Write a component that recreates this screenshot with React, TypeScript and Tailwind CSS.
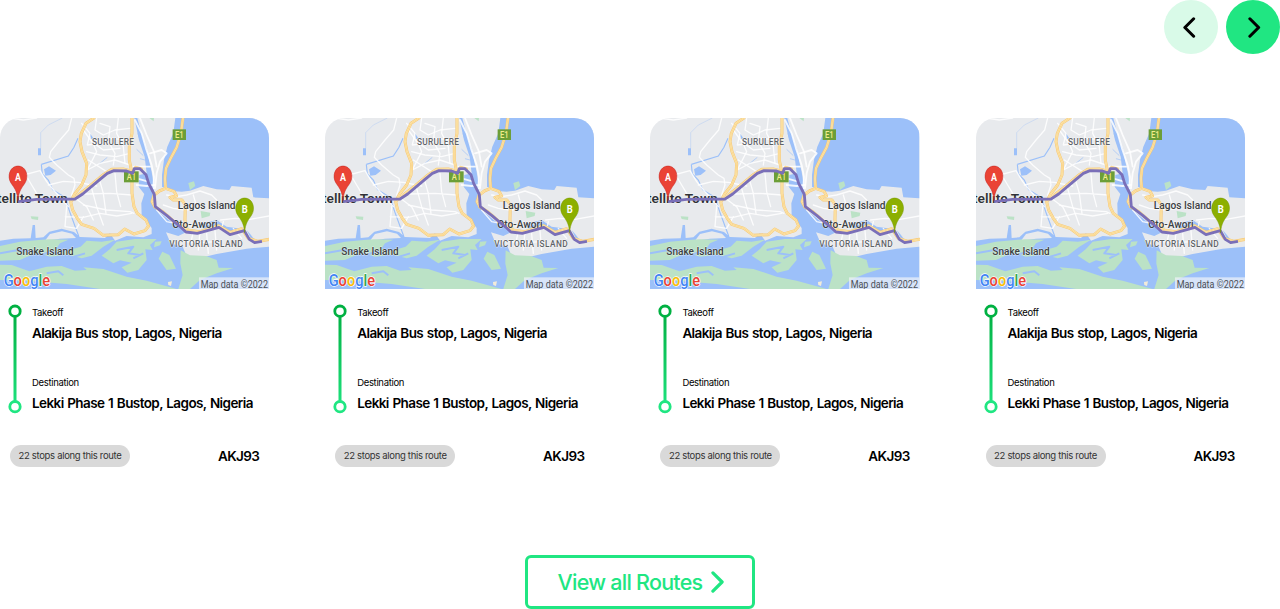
import React from "react";

type Route = { from: string; to: string; stops: number; code: string };

const routes: Route[] = Array.from({ length: 4 }, () => ({
  from: "Alakija Bus stop, Lagos, Nigeria",
  to: "Lekki Phase 1 Bustop, Lagos, Nigeria",
  stops: 22,
  code: "AKJ93",
}));

const streets = [
  "M30 24L70 30L110 24",
  "M215 24L206 60L180 90L152 125L148 142L170 165L205 195L222 205L225 225L215 255",
  "M60 198L120 182L140 215L165 245L180 262L205 290",
  "M80 200L95 225L110 250M145 225L190 214L235 217L290 228",
  "M245 40L270 70L262 105L300 100L330 85L385 90M290 24L285 60L310 75L345 60L390 55",
  "M300 40L330 50L325 95L345 130L340 165M260 125L300 135L350 140L390 130",
  "M275 90L290 125L262 180L300 160L345 150L390 165M265 150L320 185",
  "M250 60L275 95L310 120L360 115M355 24L350 70L370 110L375 160",
  "M300 215L310 250L318 310M345 190L350 245L362 290M255 252L330 250L395 255M250 285L320 300L390 305L402 310",
  "M196 320L250 322L300 310L350 318L395 310M200 290L195 350L230 355L250 320",
  "M275 235L290 290L310 345M230 268L260 290L280 330",
  "M405 30L425 70L438 115L455 165L462 200L460 235M420 24L440 75L462 125L470 170",
  "M450 130L485 120L500 130L480 155L470 190L465 235M400 170L450 170",
  "M410 225L440 228L465 225M410 205L445 215",
  "M500 255L530 260L560 255L600 243L635 255L650 270M490 285L520 295L555 300L610 295",
  "M580 255L590 290M620 370L625 430M580 365L570 410M600 365L595 420M645 362L650 420M555 395L600 398L650 395",
  "M662 330L705 325L750 328L808 318M670 335L665 360M700 355L725 385",
  "M470 300L500 335L550 345L600 350L650 335",
];

const highways = [
  "M282 24L258 40L244 70L240 95L246 125L260 160L258 195L245 225L224 252L212 275L218 300L232 325L245 343L282 355L310 376L355 374L374 357L402 372L435 362L446 348L438 330L412 310L402 290L396 250L396 190L388 150L388 110L396 70L396 24",
  "M549 24L543 70L530 112L512 145L498 175L495 205L497 235L478 243L462 256L456 275L464 290",
  "M497 235L522 244L530 258L510 262L520 270L546 270L556 285L555 330L562 362",
  "M218 270L235 255L270 228L310 194L335 178L370 177L398 184L407 172L425 177",
  "M464 290L490 306L525 337L560 360L600 365L655 347L690 367L725 356L745 385L775 394L808 388",
];

const ROUTE =
  "M55 275L110 268L225 267L248 252L300 208L322 190L342 182L380 183L398 190L403 176L420 176L438 194L446 220L463 253L466 290L500 316L545 354L558 366L592 370L657 352L690 374L733 362L748 388L764 398L786 394";

function Label({
  x, y, w, size, children, weight = 500, fill = "#3c4043",
}: {
  x: number; y: number; w: number; size: number; children: string; weight?: number; fill?: string;
}) {
  return (
    <text
      x={x} y={y} textLength={w} lengthAdjust="spacingAndGlyphs" fontSize={size}
      fontWeight={weight} fill={fill} stroke="#ffffff" strokeOpacity={0.6}
      strokeWidth={3} strokeLinejoin="round" paintOrder="stroke"
    >
      {children}
    </text>
  );
}

function Pin({ x, y, letter, color, edge }: { x: number; y: number; letter: string; color: string; edge: string }) {
  return (
    <g transform={`translate(${x} ${y})`}>
      <path
        d="M0 0C-2 -30 -12 -39 -21 -53C-34 -73 -24 -104 0 -104C24 -104 34 -73 21 -53C12 -39 2 -30 0 0Z"
        fill={color} stroke={edge} strokeWidth={1.5}
      />
      <text x={0} y={-60} textAnchor="middle" fontSize={31} fontWeight={700} fill="#fff" textLength={18} lengthAdjust="spacingAndGlyphs">
        {letter}
      </text>
    </g>
  );
}

function RouteMap() {
  return (
    <svg viewBox="0 24 808 513" preserveAspectRatio="none" className="block h-[171px] w-full font-['Roboto',sans-serif]">
      <rect y={24} width={808} height={513} fill="#e8eaed" />
      <g fill="#9cc0f9">
        <path d="M526 24L520 70L502 110L492 150L486 195L486 230L515 243L545 245L570 242L610 228L650 238L688 240L695 228L755 233L760 262L808 265V24Z" />
        <path d="M403 24H412L424 70L442 122L448 155L455 185L462 230L458 270L468 298L515 337L558 367L535 378L498 367L512 400L548 410L560 438L590 446L650 432L740 416L808 410V537H0V392L40 386L92 385L98 345L105 345L107 384L130 382L148 365L185 356L222 366L240 381L315 384L330 370L345 392L380 378L430 382L455 372L455 354L425 315L424 280L433 252L416 230L418 195L440 190L434 140L417 90Z" />
        <path d="M114 115H123V136H114ZM132 178L147 169L168 182L152 195L136 197ZM270 70L280 85L274 88Z" />
        <path d="M600 342L650 330L680 350L713 355L714 364L680 365L655 346L610 356Z" />
        <path d="M740 360L753 375L764 390L753 386Z" />
      </g>
      <path d="M135 392L150 372L186 364L216 371L228 384L180 386Z" fill="#e8eaed" />
      <g fill="none" stroke="#9cc0f9">
        <path d="M187 24L145 45L122 68V115" strokeWidth={1.5} strokeOpacity={0.7} />
        <path d="M124 163L205 138L222 112L234 85M124 163L127 192L145 210L158 239L195 262L209 305L236 378" strokeWidth={3.5} />
        <path d="M296 163L322 142M414 70L420 90M410 118L430 137M420 146L435 150" strokeWidth={2} />
      </g>
      <g fill="#bbe2c6">
        <path d="M0 408L60 395L125 389L150 388L205 389L180 400L170 415L190 425L242 410L260 392L305 395L345 389L310 410L275 437L245 445L205 434L150 440L110 428L60 450L0 452Z" />
        <path d="M0 464L35 465L88 484L140 470L185 468L225 482L260 480L250 472L310 477L380 500L440 512L530 537H0Z" />
        <path d="M305 437L330 417L350 395L405 387L470 387L450 405L458 420L436 418L440 450L415 480L382 488L365 472L395 458L360 451L340 460Z" />
        <path d="M465 395L485 394L480 406L462 412ZM503 391L518 392L510 398ZM487 425L508 435L528 476L500 480L476 446Z" />
        <path d="M542 421L570 436L618 438L650 450L656 473L700 474L650 490L600 510L570 537H535L548 495L541 460Z" />
        <path d="M565 219L582 214L586 228L570 240ZM602 303L631 308L629 318L605 325ZM448 24H462L461 34ZM92 319L115 320L114 330L95 327Z" />
      </g>
      <g fill="none" stroke="#9cc0f9" strokeLinejoin="round">
        <path d="M0 430L55 420L105 425M120 435L155 425L210 444L255 430M350 420L400 410L385 430L420 435M400 445L430 430M140 490L175 484L190 496" strokeWidth={6} />
      </g>
      <path d="M0 510L100 514L200 522L300 537H0Z" fill="#9cc0f9" />
      <path d="M504 516L516 514L513 528L505 525Z" fill="#f3ebd8" />
      <g fill="none" strokeLinejoin="round" strokeLinecap="round">
        {streets.map((d, i) => <path key={i} d={d} stroke="#ffffff" strokeOpacity={0.85} strokeWidth={i > 10 && i < 14 ? 5.5 : 4} />)}
        {highways.map((d, i) => <path key={i} d={d} stroke="#f8c873" strokeWidth={9} />)}
        {highways.map((d, i) => <path key={i} d={d} stroke="#fdeab2" strokeWidth={5.5} />)}
        {highways.map((d, i) => <path key={i} d={d} stroke="#f6c473" strokeWidth={1.5} />)}
      </g>
      <g fontWeight={500} fontSize={28} fill="#f1ec8c">
        <rect x={518} y={58} width={40} height={32} fill="#6c9e37" />
        <text x={525} y={85} textLength={26} lengthAdjust="spacingAndGlyphs">E1</text>
        <rect x={372} y={184} width={44} height={33} fill="#6c9e37" />
        <text x={380} y={211} textLength={28} lengthAdjust="spacingAndGlyphs">A1</text>
      </g>
      <text x={276} y={106} textLength={126} fontSize={25} fontWeight={500} fill="#5f6368" stroke="#fff" strokeWidth={2} paintOrder="stroke">SURULERE</text>
      <Label x={-9} y={278} w={212} size={41} weight={600} fill="#303236">tellite Town</Label>
      <Label x={533} y={298} w={174} size={34}>Lagos Island</Label>
      <Label x={517} y={355} w={136} size={32}>Oto-Awori</Label>
      <Label x={49} y={436} w={172} size={35}>Snake Island</Label>
      <text x={508} y={410} textLength={220} fontSize={25} fontWeight={500} fill="#5f6368" stroke="#fff" strokeWidth={2} paintOrder="stroke">VICTORIA ISLAND</text>
      <path d={ROUTE} fill="none" stroke="#7a6fb8" strokeWidth={8.5} strokeLinejoin="round" />
      <Pin x={54} y={272} letter="A" color="#ea4335" edge="#c5221f" />
      <Pin x={734} y={368} letter="B" color="#8caf00" edge="#779700" />
      <text
        x={11} y={527} fontSize={51} fontWeight={500} textLength={139} lengthAdjust="spacingAndGlyphs"
        stroke="#fff" strokeWidth={4} paintOrder="stroke" strokeLinejoin="round"
      >
        <tspan fill="#4285f4">G</tspan><tspan fill="#ea4335">o</tspan><tspan fill="#fbbc04">o</tspan><tspan fill="#4285f4">g</tspan><tspan fill="#34a853">l</tspan><tspan fill="#ea4335">e</tspan>
      </text>
      <rect x={597} y={502} width={211} height={35} fill="#f1f4fa" opacity={0.7} />
      <text x={602} y={533} fontSize={32} fill="#4c5056" textLength={202} lengthAdjust="spacingAndGlyphs">Map data ©2022</text>
    </svg>
  );
}

function Timeline() {
  return (
    <svg viewBox="0 0 14 110" className="mt-[15px] block h-[110px] w-3.5 shrink-0" fill="none">
      <defs>
        <linearGradient id="line" x1="0" y1="0" x2="0" y2="110" gradientUnits="userSpaceOnUse">
          <stop stopColor="#00ac3e" />
          <stop offset="1" stopColor="#20e682" />
        </linearGradient>
      </defs>
      <rect x="5.5" y="12" width="3" height="86" fill="url(#line)" />
      <circle cx="7" cy="7.2" r="5.2" fill="#fff" stroke="#00b142" strokeWidth="2.8" />
      <circle cx="7" cy="102.7" r="5.2" fill="#fff" stroke="#20e682" strokeWidth="2.8" />
    </svg>
  );
}

function RouteCard({ from, to, stops, code }: Route) {
  return (
    <article className="w-[269.3px] shrink-0">
      <div className="overflow-hidden rounded-t-[20px]">
        <RouteMap />
      </div>
      <div className="flex gap-[10px] pl-2">
        <Timeline />
        <div className="whitespace-nowrap pt-4 text-black">
          <p className="text-[9.5px] leading-4 tracking-[-0.35px]">Takeoff</p>
          <p className="mt-[2px] text-[13.5px] font-semibold leading-5 tracking-[-0.58px] [word-spacing:0.8px]">{from}</p>
          <p className="mt-8 text-[9.5px] leading-4 tracking-[-0.33px]">Destination</p>
          <p className="mt-[2px] text-[13.5px] font-semibold leading-5 tracking-[-0.58px] [word-spacing:0.8px]">{to}</p>
        </div>
      </div>
      <div className="mt-[31px] flex items-center justify-between px-[10px]">
        <span className="flex h-[22px] w-[120px] items-center justify-center whitespace-nowrap rounded-full bg-[#d9d9d9] pt-px text-[9.5px] tracking-[-0.32px] text-[#333]">
          {stops} stops along this route
        </span>
        <span className="text-[13.5px] font-semibold leading-5 tracking-[-0.6px] text-black">{code}</span>
      </div>
    </article>
  );
}

function Chevron({ left = false, className }: { left?: boolean; className: string }) {
  return (
    <svg viewBox="0 0 14 24" className={className} fill="none" stroke="currentColor" strokeWidth="3.5" strokeLinecap="round" strokeLinejoin="round">
      <path d={left ? "M12 2L2 12L12 22" : "M2 2L12 12L2 22"} />
    </svg>
  );
}

export default function App() {
  return (
    <main className="h-[609px] overflow-hidden bg-white font-['Inter',sans-serif]">
      <div className="flex justify-end gap-2">
        <button aria-label="Previous" className="flex size-[54px] items-center justify-center rounded-full bg-[#d9fae8] pr-[3px] text-black">
          <Chevron left className="h-[21px] w-[12.5px]" />
        </button>
        <button aria-label="Next" className="flex size-[54px] items-center justify-center rounded-full bg-[#20e682] pl-[3px] text-black">
          <Chevron className="h-[21px] w-[12.5px]" />
        </button>
      </div>
      <div className="mt-16 flex gap-[55.9px]">
        {routes.map((r, i) => <RouteCard key={i} {...r} />)}
      </div>
      <div className="mt-[88px] flex justify-center">
        <button className="flex h-[54px] w-[230px] shrink-0 items-center justify-center gap-[9px] rounded-[6px] border-[3px] border-[#20e682] pl-[2px] text-[21.5px] font-medium tracking-[-0.75px] text-[#20e682]">
          <span className="whitespace-nowrap">View all Routes</span>
          <Chevron className="h-[22px] w-[13px]" />
        </button>
      </div>
    </main>
  );
}
